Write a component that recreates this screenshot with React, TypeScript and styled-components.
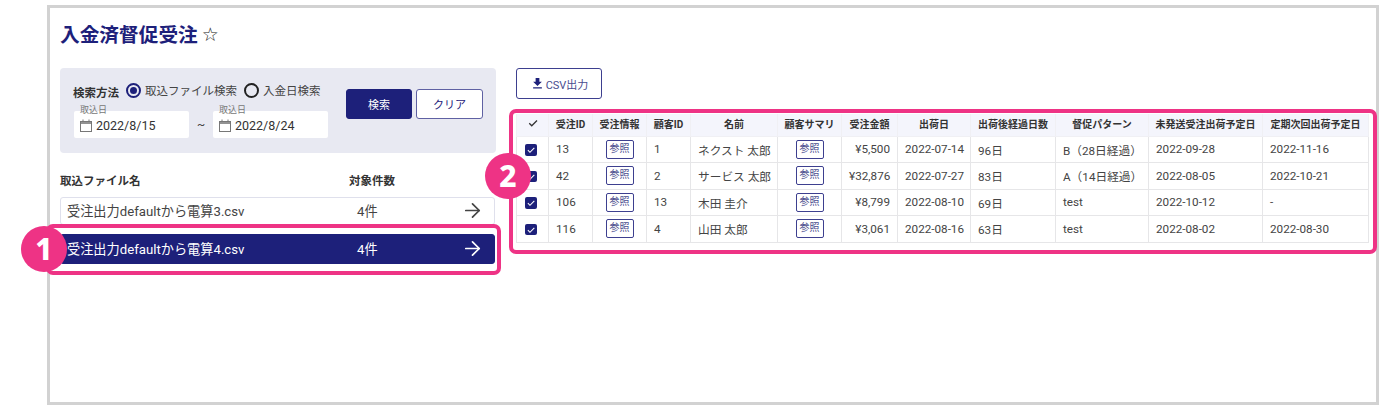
import { ArrowRight } from 'lucide-react';
import styled, { createGlobalStyle } from 'styled-components';

const NAVY = '#1d207a';
const PINK = '#ee3385';
const FONT = `Roboto, "Noto Sans CJK JP", sans-serif`;

const GlobalStyle = createGlobalStyle`
  html, body {
    margin: 0;
    padding: 0;
    background: #fff;
    font-family: ${FONT};
    color: #3a3a3a;
  }
`;

const Page = styled.div`
  position: relative;
  width: 1379px;
  height: 407px;
  overflow: hidden;
  padding: 5px 0 2px 47px;
  box-sizing: border-box;
`;

const Frame = styled.div`
  box-sizing: border-box;
  height: 100%;
  border: 3px solid #d2d2d2;
  padding: 0 0 0 10px;
`;

const Title = styled.h1`
  margin: 0;
  height: 60px;
  display: flex;
  align-items: center;
  gap: 4px;
  padding-bottom: 9px;
  font-size: 19.7px;
  font-weight: 700;
  color: ${NAVY};
  box-sizing: border-box;
  span {
    color: #222;
    font-weight: 400;
    font-size: 19px;
    font-family: "DejaVu Sans", sans-serif;
  }
`;

const Columns = styled.div`
  display: grid;
  grid-template-columns: 436px 852px;
  column-gap: 20px;
`;

const LeftColumn = styled.div`
  display: flex;
  flex-direction: column;
`;

const RightColumn = styled.div`
  display: flex;
  flex-direction: column;
  align-items: flex-start;
`;

const SearchPanel = styled.div`
  height: 85px;
  box-sizing: border-box;
  background: #e8e9f2;
  border-radius: 4px;
  padding: 14px 13px 0 13px;
  display: flex;
  justify-content: space-between;
`;

const SearchFields = styled.div`
  display: flex;
  flex-direction: column;
`;

const MethodRow = styled.div`
  display: flex;
  align-items: center;
  height: 16px;
  font-size: 11.5px;
`;

const MethodLabel = styled.span`
  font-weight: 700;
  color: #333;
  width: 53px;
  position: relative;
  top: 2px;
`;

const RadioLabel = styled.label`
  display: flex;
  align-items: center;
  gap: 4px;
  margin-right: 7px;
  color: #444;
`;

const RadioMark = styled.span<{ $checked?: boolean }>`
  width: 15px;
  height: 15px;
  box-sizing: border-box;
  border-radius: 50%;
  border: 2px solid ${(p) => (p.$checked ? NAVY : '#222')};
  display: flex;
  align-items: center;
  justify-content: center;
  &::after {
    content: '';
    display: ${(p) => (p.$checked ? 'block' : 'none')};
    width: 7px;
    height: 7px;
    border-radius: 50%;
    background: ${NAVY};
  }
`;

const DateRow = styled.div`
  display: flex;
  align-items: center;
  margin-top: 13px;
  margin-left: 1px;
`;

const DateField = styled.div`
  position: relative;
  width: 115px;
  height: 27px;
  box-sizing: border-box;
  background: #fff;
  border-radius: 2px;
  display: flex;
  align-items: center;
  gap: 4px;
  padding: 2px 0 0 6px;
  font-size: 12.5px;
  color: #333;
`;

const FloatLabel = styled.span`
  position: absolute;
  left: 6px;
  top: -6px;
  font-size: 9px;
  line-height: 11px;
  color: #777;
`;

const Tilde = styled.span`
  width: 24px;
  text-align: center;
  font-size: 12px;
  color: #444;
`;

const ButtonRow = styled.div`
  display: flex;
  gap: 4px;
  margin-top: 7px;
`;

const Button = styled.button<{ $primary?: boolean }>`
  width: ${(p) => (p.$primary ? '66px' : '67px')};
  height: 30px;
  box-sizing: border-box;
  border-radius: 3px;
  border: 1px solid ${(p) => (p.$primary ? NAVY : '#5f61a3')};
  background: ${(p) => (p.$primary ? NAVY : '#fff')};
  color: ${(p) => (p.$primary ? '#fff' : NAVY)};
  font-family: ${FONT};
  font-size: 11px;
  padding: 0;
`;

const FileHeader = styled.div`
  display: grid;
  grid-template-columns: 289px 1fr;
  margin-top: 21px;
  height: 15px;
  line-height: 15px;
  font-size: 11.5px;
  font-weight: 700;
  color: #333;
`;

const FileRow = styled.div<{ $active?: boolean }>`
  display: grid;
  grid-template-columns: 290px 1fr 23px;
  align-items: center;
  box-sizing: border-box;
  width: 435px;
  height: ${(p) => (p.$active ? '30px' : '28px')};
  margin-top: ${(p) => (p.$active ? '9px' : '8px')};
  padding: 0 10px ${(p) => (p.$active ? '2px' : '1px')} 6px;
  border: 1px solid ${(p) => (p.$active ? NAVY : '#dfe0ec')};
  border-radius: 3px;
  background: ${(p) => (p.$active ? NAVY : '#fff')};
  color: ${(p) => (p.$active ? '#fff' : '#444')};
  font-size: 13.2px;
`;

const CsvButton = styled.button`
  display: flex;
  align-items: center;
  justify-content: center;
  gap: 1px;
  width: 86px;
  height: 31px;
  box-sizing: border-box;
  padding: 0;
  border: 1px solid #3d3f8f;
  border-radius: 3px;
  background: #fff;
  color: #4a4c8e;
  font-family: ${FONT};
  font-size: 11px;
`;

const Table = styled.table`
  margin-top: 15px;
  width: 852px;
  table-layout: fixed;
  border-collapse: collapse;
  font-size: 11.7px;
  color: #444;
`;

const HeadCell = styled.th`
  height: 22px;
  padding: 0 0 2px;
  box-sizing: border-box;
  background: #f4f5fc;
  border: 1px solid #f0f0f4;
  border-top: 0;
  font-size: 10px;
  font-weight: 700;
  color: #333;
  text-align: center;
`;

const Cell = styled.td<{ $align?: string }>`
  height: 26.5px;
  padding: 0 7px;
  border: 1px solid #e6e6e8;
  box-sizing: border-box;
  text-align: ${(p) => p.$align || 'left'};
  white-space: nowrap;
`;

const RefButton = styled.span`
  display: inline-block;
  width: 28px;
  height: 19px;
  line-height: 16px;
  box-sizing: border-box;
  border: 1px solid #3d3f8f;
  border-radius: 2px;
  font-size: 10px;
  color: #4a4c8e;
  text-align: center;
  vertical-align: middle;
`;

const Check = styled.span`
  display: inline-flex;
  align-items: center;
  justify-content: center;
  width: 11.5px;
  height: 11.5px;
  margin-right: 3px;
  background: ${NAVY};
  border-radius: 2px;
  vertical-align: middle;
`;

const Highlight = styled.div<{ $l: number; $t: number; $w: number; $h: number }>`
  position: absolute;
  left: ${(p) => p.$l}px;
  top: ${(p) => p.$t}px;
  width: ${(p) => p.$w}px;
  height: ${(p) => p.$h}px;
  box-sizing: border-box;
  border: 4px solid ${PINK};
  border-radius: 7px;
`;

const Badge = styled.div<{ $x: number; $y: number }>`
  position: absolute;
  left: ${(p) => p.$x - 23}px;
  top: ${(p) => p.$y - 23}px;
  width: 46px;
  height: 46px;
  border-radius: 50%;
  background: ${PINK};
  color: #fff;
  font-family: "Noto Sans", sans-serif;
  font-size: 30px;
  font-weight: 800;
  line-height: 46px;
  text-align: center;
`;

const CalendarIcon = () => (
  <svg width="12" height="13" viewBox="0 0 12 13" fill="none" stroke="#777" strokeWidth="1">
    <rect x="0.5" y="2.5" width="11" height="10" />
    <path d="M0.5 4h11" strokeWidth="1.6" />
    <path d="M3 0.5v2M9 0.5v2" />
  </svg>
);

const DownloadIcon = () => (
  <svg width="15" height="15" viewBox="0 0 24 24" fill={NAVY}>
    <path d="M5 20h14v-2H5v2zM19 9h-4V3H9v6H5l7 7 7-7z" />
  </svg>
);

const TickIcon = ({ color, size }: { color: string; size: number }) => (
  <svg width={size} height={size} viewBox="0 0 24 24" fill="none" stroke={color} strokeWidth="2.6">
    <path d="M4.5 12.5l5 5L20 7" />
  </svg>
);

const columns = [32, 44, 54, 44, 87, 64, 56, 73, 85, 93, 114, 106];
const headers = ['受注ID', '受注情報', '顧客ID', '名前', '顧客サマリ', '受注金額', '出荷日', '出荷後経過日数', '督促パターン', '未発送受注出荷予定日', '定期次回出荷予定日'];

const rows = [
  { id: '13', customer: '1', name: 'ネクスト 太郎', price: '¥5,500', shipped: '2022-07-14', days: '96日', pattern: 'B（28日経過）', planned: '2022-09-28', next: '2022-11-16' },
  { id: '42', customer: '2', name: 'サービス 太郎', price: '¥32,876', shipped: '2022-07-27', days: '83日', pattern: 'A（14日経過）', planned: '2022-08-05', next: '2022-10-21' },
  { id: '106', customer: '13', name: '木田 圭介', price: '¥8,799', shipped: '2022-08-10', days: '69日', pattern: 'test', planned: '2022-10-12', next: '-' },
  { id: '116', customer: '4', name: '山田 太郎', price: '¥3,061', shipped: '2022-08-16', days: '63日', pattern: 'test', planned: '2022-08-02', next: '2022-08-30' },
];

export default function App() {
  return (
    <Page>
      <GlobalStyle />
      <Frame>
        <Title>
          入金済督促受注<span>☆</span>
        </Title>
        <Columns>
          <LeftColumn>
            <SearchPanel>
              <SearchFields>
                <MethodRow>
                  <MethodLabel>検索方法</MethodLabel>
                  <RadioLabel>
                    <RadioMark $checked />
                    取込ファイル検索
                  </RadioLabel>
                  <RadioLabel>
                    <RadioMark />
                    入金日検索
                  </RadioLabel>
                </MethodRow>
                <DateRow>
                  <DateField>
                    <FloatLabel>取込日</FloatLabel>
                    <CalendarIcon />
                    2022/8/15
                  </DateField>
                  <Tilde>~</Tilde>
                  <DateField>
                    <FloatLabel>取込日</FloatLabel>
                    <CalendarIcon />
                    2022/8/24
                  </DateField>
                </DateRow>
              </SearchFields>
              <ButtonRow>
                <Button $primary>検索</Button>
                <Button>クリア</Button>
              </ButtonRow>
            </SearchPanel>
            <FileHeader>
              <span>取込ファイル名</span>
              <span>対象件数</span>
            </FileHeader>
            <FileRow>
              <span>受注出力defaultから電算3.csv</span>
              <span>4件</span>
              <ArrowRight size={23} strokeWidth={1.8} />
            </FileRow>
            <FileRow $active>
              <span>受注出力defaultから電算4.csv</span>
              <span>4件</span>
              <ArrowRight size={23} strokeWidth={1.8} />
            </FileRow>
          </LeftColumn>
          <RightColumn>
            <CsvButton>
              <DownloadIcon />
              CSV出力
            </CsvButton>
            <Table>
              <colgroup>
                {columns.map((w, i) => (
                  <col key={i} style={{ width: w }} />
                ))}
              </colgroup>
              <thead>
                <tr>
                  <HeadCell>
                    <TickIcon color="#333" size={12} />
                  </HeadCell>
                  {headers.map((h) => (
                    <HeadCell key={h}>{h}</HeadCell>
                  ))}
                </tr>
              </thead>
              <tbody>
                {rows.map((r) => (
                  <tr key={r.id}>
                    <Cell $align="center">
                      <Check>
                        <TickIcon color="#fff" size={10} />
                      </Check>
                    </Cell>
                    <Cell>{r.id}</Cell>
                    <Cell $align="center">
                      <RefButton>参照</RefButton>
                    </Cell>
                    <Cell>{r.customer}</Cell>
                    <Cell>{r.name}</Cell>
                    <Cell $align="center">
                      <RefButton>参照</RefButton>
                    </Cell>
                    <Cell $align="right">{r.price}</Cell>
                    <Cell>{r.shipped}</Cell>
                    <Cell>{r.days}</Cell>
                    <Cell>{r.pattern}</Cell>
                    <Cell>{r.planned}</Cell>
                    <Cell>{r.next}</Cell>
                  </tr>
                ))}
              </tbody>
            </Table>
          </RightColumn>
        </Columns>
      </Frame>
      <Highlight $l={46} $t={224} $w={455} $h={51} />
      <Highlight $l={509} $t={109} $w={868} $h={145} />
      <Badge $x={44} $y={249}>1</Badge>
      <Badge $x={508} $y={176}>2</Badge>
    </Page>
  );
}
